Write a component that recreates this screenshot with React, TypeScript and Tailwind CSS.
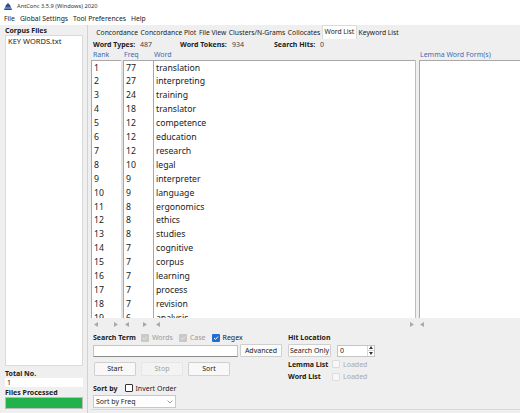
import React from "react";

const rows: [number, number, string][] = [
  [1, 77, "translation"],
  [2, 27, "interpreting"],
  [3, 24, "training"],
  [4, 18, "translator"],
  [5, 12, "competence"],
  [6, 12, "education"],
  [7, 12, "research"],
  [8, 10, "legal"],
  [9, 9, "interpreter"],
  [10, 9, "language"],
  [11, 8, "ergonomics"],
  [12, 8, "ethics"],
  [13, 8, "studies"],
  [14, 7, "cognitive"],
  [15, 7, "corpus"],
  [16, 7, "learning"],
  [17, 7, "process"],
  [18, 7, "revision"],
  [19, 6, "analysis"],
];

function Tri({ dir }: { dir: "l" | "r" }) {
  return (
    <svg width="4" height="5" viewBox="0 0 4 5" className="block">
      {dir === "l" ? (
        <polygon points="4,0 4,5 0,2.5" fill="#a9a9a9" />
      ) : (
        <polygon points="0,0 0,5 4,2.5" fill="#a9a9a9" />
      )}
    </svg>
  );
}

function Check({ kind }: { kind: "gray" | "blue" | "empty" | "disabled" }) {
  if (kind === "blue")
    return (
      <span className="w-[8px] h-[8px] rounded-[1px] bg-[#1f6fd0] flex items-center justify-center">
        <svg width="6" height="6" viewBox="0 0 6 6">
          <path d="M1 3 L2.4 4.4 L5 1.6" stroke="white" strokeWidth="1" fill="none" />
        </svg>
      </span>
    );
  if (kind === "gray")
    return (
      <span className="w-[8px] h-[8px] rounded-[1px] bg-[#c9c9c9] flex items-center justify-center">
        <svg width="6" height="6" viewBox="0 0 6 6">
          <path d="M1 3 L2.4 4.4 L5 1.6" stroke="#e6e6e6" strokeWidth="1" fill="none" />
        </svg>
      </span>
    );
  if (kind === "empty")
    return <span className="w-[8px] h-[8px] rounded-[1px] bg-white border border-[#333]" />;
  return <span className="w-[8px] h-[8px] rounded-[1px] bg-[#f7f7f7] border border-[#dcdcdc]" />;
}

export default function App() {
  return (
    <div className="w-[520px] h-[413px] bg-[#efefef] flex flex-col overflow-hidden text-[7px] leading-none text-[#1a1a1a] font-['Noto_Sans',sans-serif]">
      {/* Title bar */}
      <div className="h-[13px] bg-white flex items-center pl-[3px] gap-[4px] shrink-0">
        <svg width="10" height="9" viewBox="0 0 10 9">
          <path d="M1 8 L3 3 L5 1 L7 3 L9 8 Z" fill="#2d4e86" />
          <rect x="2" y="5" width="6" height="2" fill="#5b82c0" />
        </svg>
        <span className="text-[5.7px] text-[#333]">AntConc 3.5.9 (Windows) 2020</span>
      </div>
      {/* Menu bar */}
      <div className="h-[12px] bg-white flex items-center pl-[4px] gap-[5px] shrink-0 text-[6.8px]">
        <span>File</span>
        <span>Global Settings</span>
        <span>Tool Preferences</span>
        <span>Help</span>
      </div>
      {/* Body */}
      <div className="flex flex-1 min-h-0">
        {/* Left panel */}
        <div className="w-[88px] shrink-0 flex flex-col pl-[5px] pr-[4px] border-r border-[#d2d2d2] pb-[4px]">
          <div className="h-[9px] flex items-center font-bold mt-[1px]">Corpus Files</div>
          <div className="flex-1 bg-white border border-[#dadada] pl-[2px] pt-[2px] text-[7.5px]">
            KEY WORDS.txt
          </div>
          <div className="h-[11px] flex items-end font-bold mt-[1px] pb-[1px]">Total No.</div>
          <div className="h-[9px] bg-white flex items-center pl-[2px]">1</div>
          <div className="h-[10px] flex items-center font-bold">Files Processed</div>
          <div className="h-[12px] border border-[#bcbcbc] bg-[#22b24c]" />
        </div>
        {/* Main */}
        <div className="flex-1 flex flex-col min-w-0 pl-[3px]">
          {/* Tabs */}
          <div className="h-[14px] flex items-stretch pl-[4px] shrink-0 text-[6.75px]">
            {["Concordance", "Concordance Plot", "File View", "Clusters/N-Grams", "Collocates"].map((t) => (
              <div key={t} className="px-[1.3px] flex items-center mt-[2px]">
                {t}
              </div>
            ))}
            <div className="px-[2px] flex items-center bg-white border border-b-0 border-[#dcdcdc]">Word List</div>
            <div className="px-[1.3px] flex items-center mt-[2px]">Keyword List</div>
          </div>
          {/* Stats */}
          <div className="h-[10px] flex items-center pl-[2px] shrink-0">
            <span className="w-[47px] font-bold">Word Types:</span>
            <span className="w-[40px] text-[#444]">487</span>
            <span className="w-[52px] font-bold">Word Tokens:</span>
            <span className="w-[42px] text-[#444]">934</span>
            <span className="w-[46px] font-bold">Search Hits:</span>
            <span className="text-[#444]">0</span>
          </div>
          {/* Headers */}
          <div className="h-[11px] flex items-center shrink-0 text-[#3a6db5]">
            <span className="w-[31px] pl-[2px]">Rank</span>
            <span className="w-[30px] pl-[2px]">Freq</span>
            <span className="flex-1 pl-[2px]">Word</span>
            <span className="w-[101px] pl-[1px]">Lemma Word Form(s)</span>
          </div>
          {/* Lists */}
          <div className="h-[258px] flex shrink-0">
            <div className="w-[30px] bg-white border-l border-t border-[#a8a8a8] overflow-hidden text-[8.7px]">
              {rows.map((r) => (
                <div key={r[0]} className="h-[13.9px] flex items-center pl-[2px]">{r[0]}</div>
              ))}
            </div>
            <div className="w-[2px] bg-[#e2e2e2]" />
            <div className="w-[30px] bg-white border-l border-t border-[#a8a8a8] overflow-hidden text-[8.7px]">
              {rows.map((r) => (
                <div key={r[0]} className="h-[13.9px] flex items-center pl-[2px]">{r[1]}</div>
              ))}
            </div>
            <div className="flex-1 bg-white border-l border-t border-[#a8a8a8] overflow-hidden text-[8.7px]">
              {rows.map((r) => (
                <div key={r[0]} className="h-[13.9px] flex items-center pl-[2px]">{r[2]}</div>
              ))}
            </div>
            <div className="w-[4px] border-l border-[#bdbdbd]" />
            <div className="w-[101px] bg-white border-l border-t border-[#a8a8a8]" />
          </div>
          {/* scroll arrows */}
          <div className="h-[12px] flex items-center shrink-0 relative">
            <div className="flex items-center w-[31px] justify-between pl-[3px] pr-[4px]">
              <Tri dir="l" />
              <Tri dir="r" />
            </div>
            <div className="flex items-center w-[30px] justify-between pl-[3px] pr-[5px]">
              <Tri dir="l" />
              <Tri dir="r" />
            </div>
            <div className="flex-1 flex items-center justify-between pl-[4px] pr-[1px]">
              <Tri dir="l" />
              <Tri dir="r" />
            </div>
            <div className="w-[105px] flex items-center pl-[5px]">
              <Tri dir="l" />
            </div>
          </div>
          {/* Bottom controls */}
          <div className="flex flex-1 min-h-0 border-b border-[#d8d8d8] mb-[3px]">
            <div className="w-[196px] flex flex-col pl-[2px]">
              <div className="h-[13px] flex items-center gap-[3px] mt-[1px]">
                <span className="font-bold mr-[2px]">Search Term</span>
                <Check kind="gray" />
                <span className="text-[#9a9a9a] mr-[3px]">Words</span>
                <Check kind="gray" />
                <span className="text-[#9a9a9a] mr-[3px]">Case</span>
                <Check kind="blue" />
                <span>Regex</span>
              </div>
              <div className="h-[13px] flex items-center gap-[2px]">
                <div className="w-[145px] h-[12px] bg-white border border-[#c4c4c4] border-b-[#8a8a8a]" />
                <div className="w-[42px] h-[13px] bg-[#fbfbfb] border border-[#cfcfcf] rounded-[1px] flex items-center justify-center">
                  Advanced
                </div>
              </div>
              <div className="h-[15px] flex items-center gap-[5px] mt-[4px] pl-[1px]">
                <div className="w-[42px] h-[14px] bg-[#f8f8f8] border border-[#d0d0d0] rounded-[1px] flex items-center justify-center">
                  Start
                </div>
                <div className="w-[42px] h-[14px] bg-[#f3f3f3] border border-[#e6e6e6] rounded-[1px] flex items-center justify-center text-[#a0a0a0]">
                  Stop
                </div>
                <div className="w-[42px] h-[14px] bg-[#f8f8f8] border border-[#d0d0d0] rounded-[1px] flex items-center justify-center">
                  Sort
                </div>
              </div>
              <div className="h-[12px] flex items-center gap-[3px] mt-[6px]">
                <span className="font-bold mr-[4px]">Sort by</span>
                <Check kind="empty" />
                <span>Invert Order</span>
              </div>
              <div className="w-[83px] h-[13px] bg-white border border-[#c8c8c8] flex items-center justify-between px-[2px] mt-[1px]">
                <span>Sort by Freq</span>
                <svg width="6" height="4" viewBox="0 0 6 4">
                  <path d="M0.5 0.5 L3 3 L5.5 0.5" stroke="#888" strokeWidth="0.8" fill="none" />
                </svg>
              </div>
            </div>
            <div className="flex flex-col pl-[1px]">
              <div className="h-[13px] flex items-center font-bold mt-[1px]">Hit Location</div>
              <div className="h-[13px] flex items-center gap-[6px]">
                <div className="w-[43px] h-[13px] bg-[#fbfbfb] border border-[#cfcfcf] rounded-[1px] flex items-center justify-center">
                  Search Only
                </div>
                <div className="w-[38px] h-[12px] bg-white border border-[#c4c4c4] flex items-center justify-between pl-[2px]">
                  <span>0</span>
                  <div className="w-[7px] h-full flex flex-col border-l border-[#d8d8d8]">
                    <div className="flex-1 flex items-center justify-center border-b border-[#d8d8d8]">
                      <svg width="4" height="3" viewBox="0 0 4 3"><polygon points="0,3 4,3 2,0" fill="#333" /></svg>
                    </div>
                    <div className="flex-1 flex items-center justify-center">
                      <svg width="4" height="3" viewBox="0 0 4 3"><polygon points="0,0 4,0 2,3" fill="#333" /></svg>
                    </div>
                  </div>
                </div>
              </div>
              <div className="h-[12px] flex items-center mt-[1px]">
                <span className="font-bold w-[44px]">Lemma List</span>
                <Check kind="disabled" />
                <span className="text-[#a8a8a8] ml-[3px]">Loaded</span>
              </div>
              <div className="h-[13px] flex items-center">
                <span className="font-bold w-[44px]">Word List</span>
                <Check kind="disabled" />
                <span className="text-[#a8a8a8] ml-[3px]">Loaded</span>
              </div>
            </div>
          </div>
        </div>
      </div>
    </div>
  );
}
